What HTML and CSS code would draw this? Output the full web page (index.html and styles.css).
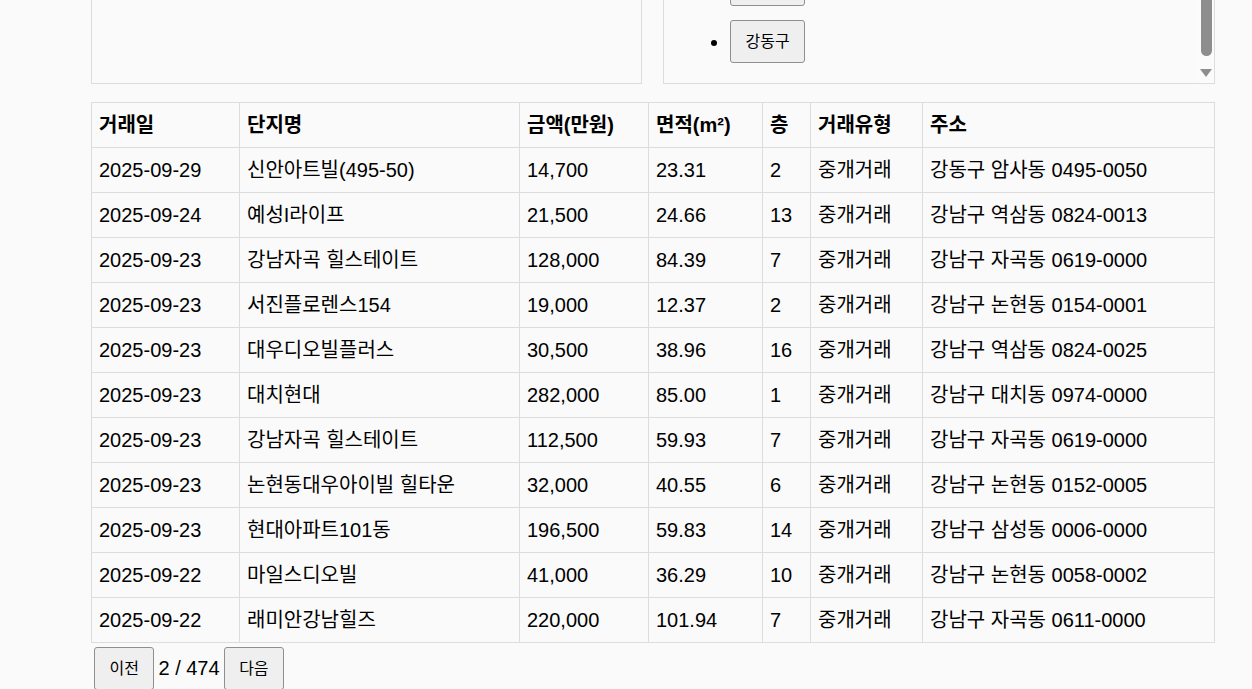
FILE: index.html
```html
<!DOCTYPE html>
<html lang="ko">
<head>
<meta charset="utf-8">
<title>실거래가</title>
<link rel="stylesheet" href="styles.css">
</head>
<body>
<div class="page">
  <div class="panels">
    <div class="panel"></div>
    <div class="panel scroll">
      <ul class="districts">
        <li><button class="btn">강서구</button></li>
        <li><button class="btn">구로구</button></li>
        <li><button class="btn">금천구</button></li>
        <li><button class="btn">영등포구</button></li>
        <li><button class="btn">동작구</button></li>
        <li><button class="btn">관악구</button></li>
        <li><button class="btn">서초구</button></li>
        <li><button class="btn">강남구</button></li>
        <li><button class="btn">송파구</button></li>
        <li><button class="btn">강동구</button></li>
      </ul>
      <div class="scrollbar">
        <div class="thumb"></div>
        <div class="arrow-down"></div>
      </div>
    </div>
  </div>

  <table class="deals">
    <thead>
      <tr>
        <th class="c-date">거래일</th>
        <th class="c-name">단지명</th>
        <th class="c-price">금액(만원)</th>
        <th class="c-area">면적(m²)</th>
        <th class="c-floor">층</th>
        <th class="c-type">거래유형</th>
        <th class="c-addr">주소</th>
      </tr>
    </thead>
    <tbody>
      <tr><td>2025-09-29</td><td>신안아트빌(495-50)</td><td>14,700</td><td>23.31</td><td>2</td><td>중개거래</td><td>강동구 암사동 0495-0050</td></tr>
      <tr><td>2025-09-24</td><td>예성I라이프</td><td>21,500</td><td>24.66</td><td>13</td><td>중개거래</td><td>강남구 역삼동 0824-0013</td></tr>
      <tr><td>2025-09-23</td><td>강남자곡 힐스테이트</td><td>128,000</td><td>84.39</td><td>7</td><td>중개거래</td><td>강남구 자곡동 0619-0000</td></tr>
      <tr><td>2025-09-23</td><td>서진플로렌스154</td><td>19,000</td><td>12.37</td><td>2</td><td>중개거래</td><td>강남구 논현동 0154-0001</td></tr>
      <tr><td>2025-09-23</td><td>대우디오빌플러스</td><td>30,500</td><td>38.96</td><td>16</td><td>중개거래</td><td>강남구 역삼동 0824-0025</td></tr>
      <tr><td>2025-09-23</td><td>대치현대</td><td>282,000</td><td>85.00</td><td>1</td><td>중개거래</td><td>강남구 대치동 0974-0000</td></tr>
      <tr><td>2025-09-23</td><td>강남자곡 힐스테이트</td><td>112,500</td><td>59.93</td><td>7</td><td>중개거래</td><td>강남구 자곡동 0619-0000</td></tr>
      <tr><td>2025-09-23</td><td>논현동대우아이빌 힐타운</td><td>32,000</td><td>40.55</td><td>6</td><td>중개거래</td><td>강남구 논현동 0152-0005</td></tr>
      <tr><td>2025-09-23</td><td>현대아파트101동</td><td>196,500</td><td>59.83</td><td>14</td><td>중개거래</td><td>강남구 삼성동 0006-0000</td></tr>
      <tr><td>2025-09-22</td><td>마일스디오빌</td><td>41,000</td><td>36.29</td><td>10</td><td>중개거래</td><td>강남구 논현동 0058-0002</td></tr>
      <tr><td>2025-09-22</td><td>래미안강남힐즈</td><td>220,000</td><td>101.94</td><td>7</td><td>중개거래</td><td>강남구 자곡동 0611-0000</td></tr>
    </tbody>
  </table>

  <div class="pager">
    <button class="btn">이전</button>
    <span class="pageinfo">2 / 474</span>
    <button class="btn">다음</button>
  </div>
</div>
</body>
</html>
```

FILE: styles.css
```css
html, body {
  margin: 0;
  padding: 0;
  background: #fafafa;
  color: #000;
  font-family: "Liberation Sans", "Noto Sans CJK KR", sans-serif;
  overflow: hidden;
}

.page {
  width: 1124px;
  margin-left: 91px;
}

.panels {
  display: grid;
  grid-template-columns: 551px 552px;
  column-gap: 21px;
  margin-top: -216px;
}

.panel {
  box-sizing: border-box;
  height: 300px;
  border: 1px solid #ddd;
  background: #fafafa;
}

.scroll {
  position: relative;
  display: flex;
  flex-direction: column;
  justify-content: flex-end;
  overflow: hidden;
}

.districts {
  margin: 0;
  padding: 14px 0 20px 66px;
  list-style: disc;
}

.districts li {
  margin-bottom: 14px;
  font-size: 21px;
  line-height: 43px;
  height: 43px;
}

.districts li:last-child {
  margin-bottom: 0;
}

.scrollbar {
  position: absolute;
  top: 0;
  right: 0;
  bottom: 0;
  width: 17px;
  background: #fbfbfb;
}

.thumb {
  position: absolute;
  left: 4px;
  width: 11px;
  top: 130px;
  bottom: 27px;
  background: #8e8e8e;
  border-radius: 6px;
}

.arrow-down {
  position: absolute;
  left: 3px;
  bottom: 6px;
  width: 0;
  height: 0;
  border-left: 6px solid transparent;
  border-right: 6px solid transparent;
  border-top: 8px solid #8e8e8e;
}

.btn {
  font-family: "Liberation Sans", "Noto Sans CJK KR", sans-serif;
  font-size: 16px;
  line-height: 21px;
  padding: 10px 14.5px;
  background: #efefef;
  border: 1px solid #8f8f8f;
  border-radius: 3px;
  color: #000;
  vertical-align: top;
}

.deals {
  width: 1124px;
  margin-top: 18px;
  border-collapse: collapse;
  table-layout: fixed;
  font-size: 20px;
  line-height: 28px;
}

.deals th,
.deals td {
  border: 1px solid #ddd;
  padding: 8px 8px 8px 7px;
  text-align: left;
  white-space: nowrap;
}

.deals th {
  font-weight: bold;
}

.c-date { width: 132px; }
.c-name { width: 264px; }
.c-price { width: 113px; }
.c-area { width: 98px; }
.c-floor { width: 32px; }
.c-type { width: 96px; }
.c-addr { width: auto; }

.pager {
  display: flex;
  align-items: center;
  gap: 4px;
  margin-top: 4px;
  padding-left: 3px;
  font-size: 20px;
}
```
